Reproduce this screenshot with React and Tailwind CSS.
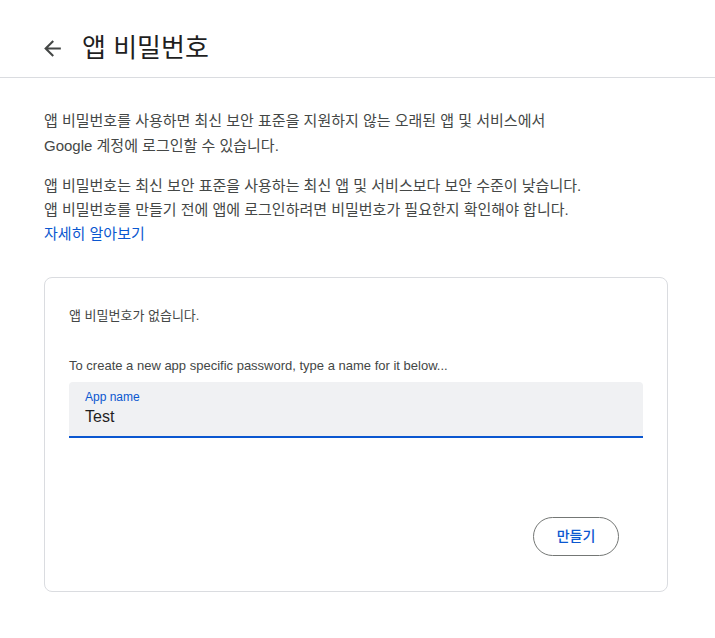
import React from "react";

const KR = { fontFamily: '"Liberation Sans", "Noto Sans CJK KR", sans-serif' };

export default function App() {
  return (
    <div className="min-h-[638px] w-[715px] bg-white text-[#1f1f1f]" style={KR}>
      <header className="flex h-[78px] items-end border-b border-[#dadce0] pb-[13px]">
        <div className="flex items-center pl-[40px]">
          <button className="flex h-[25px] w-[25px] items-center justify-center text-[#444746]">
            <svg width="25" height="25" viewBox="0 0 24 24" fill="currentColor">
              <path d="M20 11H7.83l5.59-5.59L12 4l-8 8 8 8 1.41-1.41L7.83 13H20v-2z" />
            </svg>
          </button>
          <h1 className="ml-[17px] text-[26px] leading-[32px] text-[#1f1f1f]">앱 비밀번호</h1>
        </div>
      </header>

      <main className="px-[44px] pt-[30px]">
        <p className="text-[15px] leading-[25px] text-[#444746]">
          앱 비밀번호를 사용하면 최신 보안 표준을 지원하지 않는 오래된 앱 및 서비스에서
          <br />
          Google 계정에 로그인할 수 있습니다.
        </p>
        <p className="mt-[16px] text-[15px] leading-[24px] text-[#444746]">
          앱 비밀번호는 최신 보안 표준을 사용하는 최신 앱 및 서비스보다 보안 수준이 낮습니다.
          <br />
          앱 비밀번호를 만들기 전에 앱에 로그인하려면 비밀번호가 필요한지 확인해야 합니다.
          <br />
          <a className="text-[#0b57d0]">자세히 알아보기</a>
        </p>

        <section className="mt-[31px] flex h-[315px] w-[624px] flex-col rounded-[8px] border border-[#dadce0] px-[24px] pt-[28px]">
          <p className="text-[13px] leading-[20px] text-[#444746]">앱 비밀번호가 없습니다.</p>
          <p className="mt-[31px] text-[13px] leading-[18px] text-[#444746]">
            To create a new app specific password, type a name for it below...
          </p>
          <div className="mt-[7px] flex h-[56px] w-[574px] flex-col rounded-t-[4px] border-b-2 border-[#0b57d0] bg-[#f0f1f3] px-[16px] pt-[7px]">
            <span className="text-[12px] leading-[16px] text-[#0b57d0]">App name</span>
            <span className="mt-[1px] text-[16px] leading-[22px] text-[#1f1f1f]">Test</span>
          </div>
          <div className="mt-[79px] flex w-[574px] justify-end pr-[24px]">
            <button className="flex h-[39px] w-[86px] items-center justify-center rounded-full border border-[#747775] text-[14px] font-medium text-[#0b57d0]">
              만들기
            </button>
          </div>
        </section>
      </main>
    </div>
  );
}
